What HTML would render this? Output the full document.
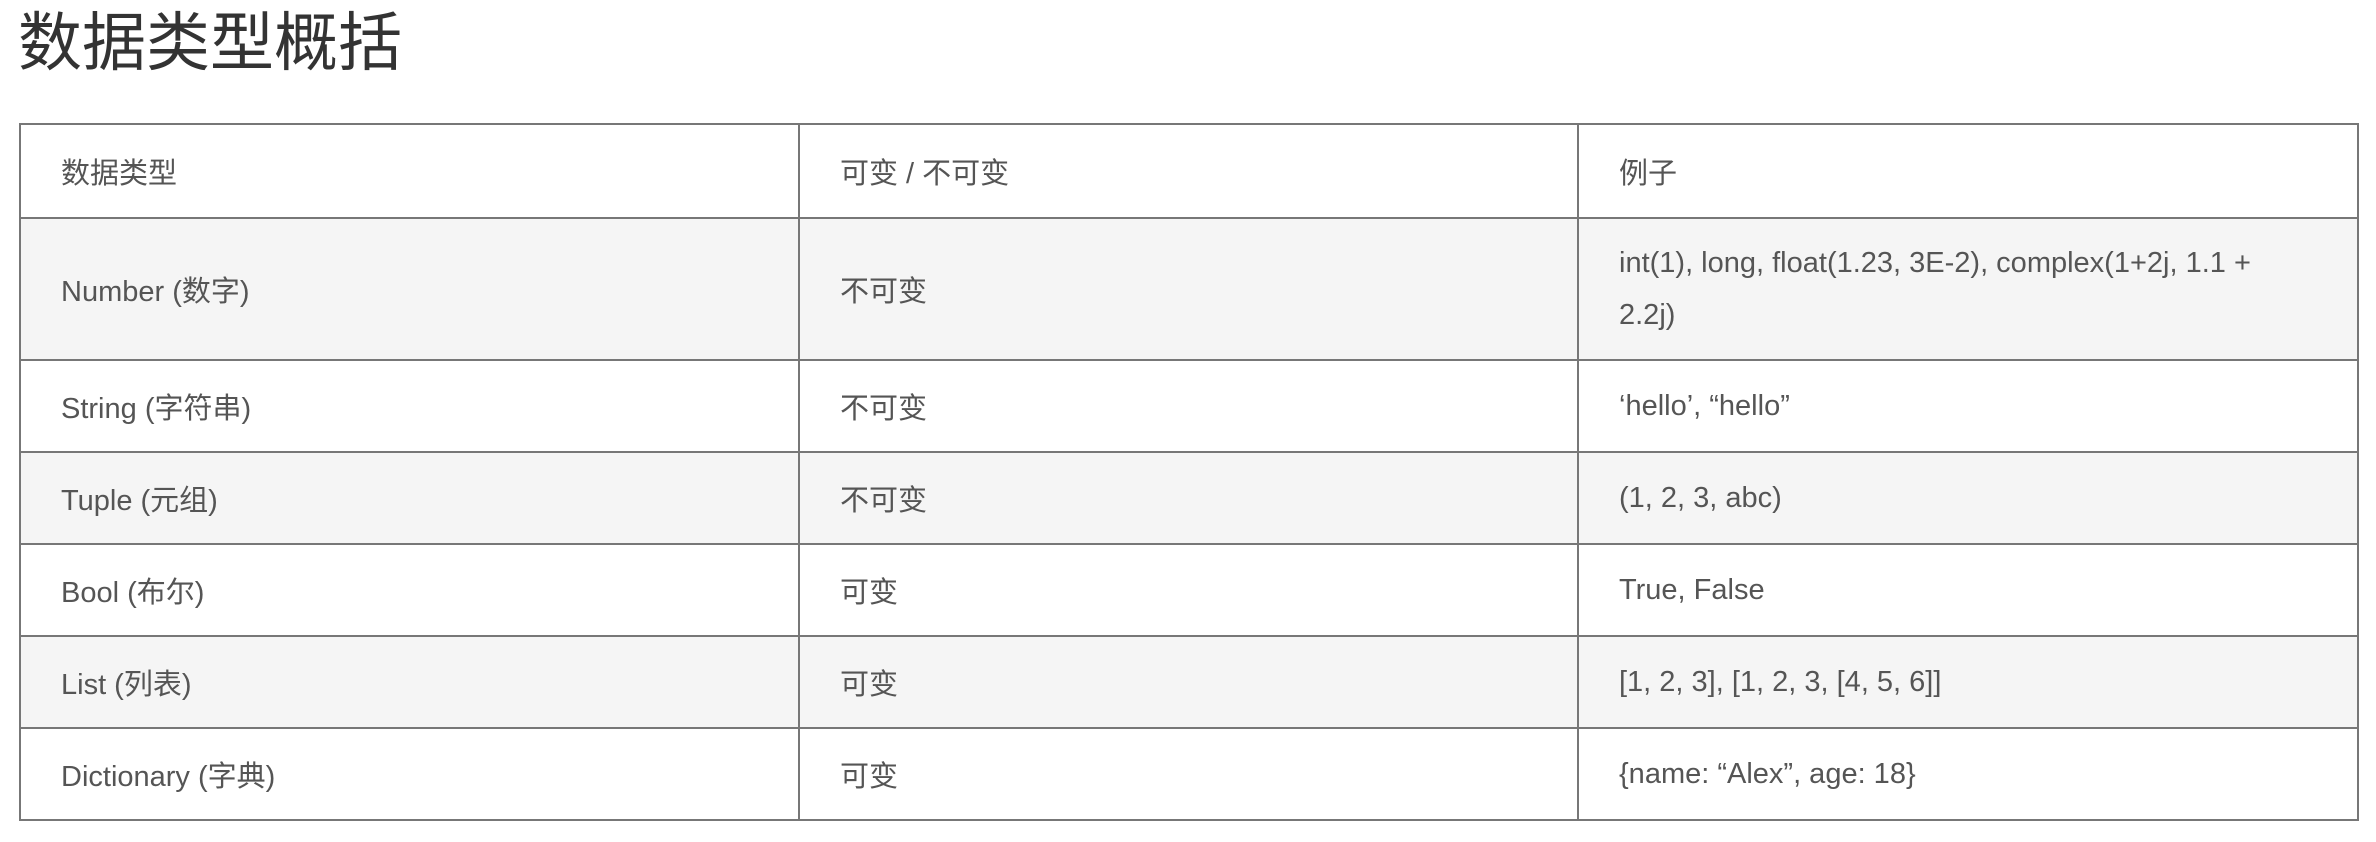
<!DOCTYPE html>
<html><head><meta charset="utf-8"><style>
html,body{margin:0;padding:0;background:#fff;width:2376px;height:842px;overflow:hidden}
body{font-family:"Liberation Sans","Noto Sans CJK SC",sans-serif}
h1{position:absolute;left:18px;top:3px;margin:0;font-weight:normal;font-size:64px;line-height:80px;color:#333;font-family:"Liberation Sans","Noto Sans CJK SC",sans-serif}
table{position:absolute;left:19px;top:123px;width:2338px;border-collapse:collapse;table-layout:fixed;font-size:29px;color:#555}
td{border:2px solid #777;padding:0 40px;vertical-align:middle;white-space:nowrap}
tr{height:92px}
tr.g td{background:#f5f5f5}
</style></head><body>
<h1>数据类型概括</h1>
<table>
<colgroup><col style="width:779px"><col style="width:779px"><col style="width:780px"></colgroup>
<tr style="height:94px"><td>数据类型</td><td>可变 / 不可变</td><td>例子</td></tr>
<tr class="g" style="height:142px"><td>Number (数字)</td><td>不可变</td><td style="line-height:52px">int(1), long, float(1.23, 3E-2), complex(1+2j, 1.1 +<br>2.2j)</td></tr>
<tr><td>String (字符串)</td><td>不可变</td><td>‘hello’, “hello”</td></tr>
<tr class="g"><td>Tuple (元组)</td><td>不可变</td><td>(1, 2, 3, abc)</td></tr>
<tr><td>Bool (布尔)</td><td>可变</td><td>True, False</td></tr>
<tr class="g"><td>List (列表)</td><td>可变</td><td>[1, 2, 3], [1, 2, 3, [4, 5, 6]]</td></tr>
<tr><td>Dictionary (字典)</td><td>可变</td><td>{name: “Alex”, age: 18}</td></tr>
</table>
</body></html>
